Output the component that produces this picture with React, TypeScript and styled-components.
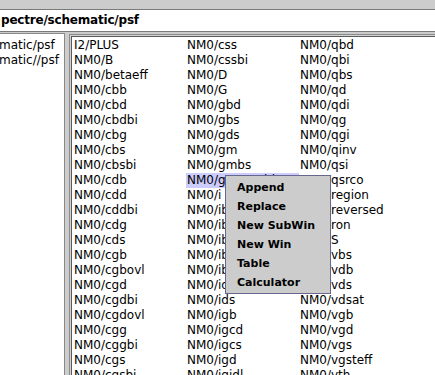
import React from "react";
import styled, { createGlobalStyle } from "styled-components";

/**
 * Styled Component
 */

const GlobalStyle = createGlobalStyle`
  html, body {
    margin: 0;
    padding: 0;
    width: 435px;
    height: 375px;
    overflow: hidden;
    background: #cccccc;
  }
`;

const listFont = `"DejaVu Sans", "Bitstream Vera Sans", sans-serif`;

const Window = styled.div`
  display: flex;
  flex-direction: column;
  width: 435px;
  height: 375px;
  overflow: hidden;
  background: #cccccc;
  color: #000;
  font-family: ${listFont};
  position: relative;
`;

const Toolbar = styled.div`
  height: 9px;
  background: #cccccc;
`;

const PathField = styled.div`
  height: 21px;
  line-height: 21px;
  background: #fff;
  border-top: 1px solid #7a7a7a;
  border-bottom: 1px solid #7a7a7a;
  font-size: 12px;
  font-weight: bold;
  letter-spacing: -0.2px;
  white-space: nowrap;
  overflow: hidden;
  padding-left: 1px;
`;

const Body = styled.div`
  flex: 1;
  display: flex;
  gap: 4px;
  margin-top: 1px;
  min-height: 0;
`;

/* Left tree */
const LeftPanel = styled.div`
  width: 64px;
  flex: none;
  background: #fff;
  border-top: 1px solid #8a8a8a;
  border-right: 1px solid #8a8a8a;
  padding-top: 4px;
  overflow: hidden;
`;

const LeftRow = styled.div`
  height: 15px;
  line-height: 15px;
  font-size: 12px;
  white-space: nowrap;
  text-indent: -1px;
`;

/* Signal list */
const RightPanel = styled.div`
  flex: 1;
  margin-top: 1px;
  background: #fff;
  box-shadow: inset 1px 1px 0 #8a8a8a, inset 2px 2px 0 #d4d4d4,
    inset 3px 3px 0 #5a5a5a;
  padding: 4px 0 0 4px;
  overflow: hidden;
`;

const SignalGrid = styled.div`
  display: grid;
  grid-auto-flow: column;
  grid-template-rows: repeat(23, 15px);
  grid-auto-columns: 113px;
`;

const Cell = styled.div<{ $selected?: boolean }>`
  height: 15px;
  line-height: 15px;
  font-size: 12px;
  padding-left: 1px;
  white-space: nowrap;
  overflow: hidden;
  background: ${(p) => (p.$selected ? "#ccccff" : "transparent")};
`;

/* Popup */
const PopupMenu = styled.div`
  position: absolute;
  left: 225px;
  top: 175px;
  width: 104px;
  padding: 2px 0 1px;
  background: #cccccc;
  border: 1px solid #66668f;
`;

const MenuItem = styled.div`
  height: 19px;
  line-height: 19px;
  padding-left: 11px;
  font-size: 11px;
  font-weight: bold;
  white-space: nowrap;
`;

/**
 * Data
 */

const columnOne = [
  "I2/PLUS", "NM0/B", "NM0/betaeff", "NM0/cbb", "NM0/cbd", "NM0/cbdbi",
  "NM0/cbg", "NM0/cbs", "NM0/cbsbi", "NM0/cdb", "NM0/cdd", "NM0/cddbi",
  "NM0/cdg", "NM0/cds", "NM0/cgb", "NM0/cgbovl", "NM0/cgd", "NM0/cgdbi",
  "NM0/cgdovl", "NM0/cgg", "NM0/cggbi", "NM0/cgs", "NM0/cgsbi",
];

const columnTwo = [
  "NM0/css", "NM0/cssbi", "NM0/D", "NM0/G", "NM0/gbd", "NM0/gbs",
  "NM0/gds", "NM0/gm", "NM0/gmbs", "NM0/gmoverid", "NM0/i", "NM0/ibd",
  "NM0/ibe", "NM0/ibs", "NM0/ibulk", "NM0/ibulkbi", "NM0/id", "NM0/ids",
  "NM0/igb", "NM0/igcd", "NM0/igcs", "NM0/igd", "NM0/igidl",
];

const columnThree = [
  "NM0/qbd", "NM0/qbi", "NM0/qbs", "NM0/qd", "NM0/qdi", "NM0/qg",
  "NM0/qgi", "NM0/qinv", "NM0/qsi", "NM0/qsrco", "NM0/region",
  "NM0/reversed", "NM0/ron", "NM0/S", "NM0/vbs", "NM0/vdb", "NM0/vds",
  "NM0/vdsat", "NM0/vgb", "NM0/vgd", "NM0/vgs", "NM0/vgsteff", "NM0/vth",
];

const signals = [...columnOne, ...columnTwo, ...columnThree];
const selectedSignal = "NM0/gmoverid";

const menuItems = ["Append", "Replace", "New SubWin", "New Win", "Table", "Calculator"];

/**
 * Template
 */

export default function App() {
  return (
    <>
      <GlobalStyle />
      <Window>
        <Toolbar />
        <PathField>pectre/schematic/psf</PathField>
        <Body>
          <LeftPanel>
            <LeftRow>matic/psf</LeftRow>
            <LeftRow>matic//psf</LeftRow>
          </LeftPanel>
          <RightPanel>
            <SignalGrid>
              {signals.map((name) => (
                <Cell key={name} $selected={name === selectedSignal}>
                  {name}
                </Cell>
              ))}
            </SignalGrid>
          </RightPanel>
        </Body>
        <PopupMenu>
          {menuItems.map((item) => (
            <MenuItem key={item}>{item}</MenuItem>
          ))}
        </PopupMenu>
      </Window>
    </>
  );
}
